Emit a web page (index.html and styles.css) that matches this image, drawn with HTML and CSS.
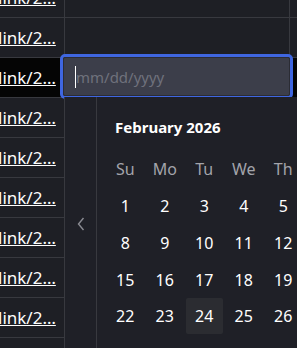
FILE: index.html
```html
<!DOCTYPE html>
<html lang="en">
<head>
    <meta charset="UTF-8">
    <title>Links grid</title>
    <link rel="stylesheet" href="styles.css">
</head>
<body>
    <div class="grid">
        <div class="row"><div class="cell link-cell"><a href="#">link/2…</a></div><div class="cell"></div><div class="cell"></div></div>
        <div class="row"><div class="cell link-cell"><a href="#">link/2…</a></div><div class="cell"></div><div class="cell"></div></div>
        <div class="row active"><div class="cell link-cell"><a href="#">link/2…</a></div><div class="cell"></div><div class="cell"></div></div>
        <div class="row"><div class="cell link-cell"><a href="#">link/2…</a></div><div class="cell"></div><div class="cell"></div></div>
        <div class="row"><div class="cell link-cell"><a href="#">link/2…</a></div><div class="cell"></div><div class="cell"></div></div>
        <div class="row"><div class="cell link-cell"><a href="#">link/2…</a></div><div class="cell"></div><div class="cell"></div></div>
        <div class="row"><div class="cell link-cell"><a href="#">link/2…</a></div><div class="cell"></div><div class="cell"></div></div>
        <div class="row"><div class="cell link-cell"><a href="#">link/2…</a></div><div class="cell"></div><div class="cell"></div></div>
        <div class="row"><div class="cell link-cell"><a href="#">link/2…</a></div><div class="cell"></div><div class="cell"></div></div>

        <!-- cell editor -->
        <div class="date-editor">
            <div class="date-input">
                <span class="caret"></span>
                <span class="placeholder">mm/dd/yyyy</span>
            </div>
        </div>

        <div class="picker">
            <div class="picker-nav">
                <svg width="8" height="14" viewBox="0 0 8 14"><path d="M6.5 1 L1.5 7 L6.5 13" fill="none" stroke="#8a8b92" stroke-width="1.4"/></svg>
            </div>
            <div class="month">
                <div class="month-title">February 2026</div>
                <div class="days">
                    <div class="wd">Su</div><div class="wd">Mo</div><div class="wd">Tu</div><div class="wd">We</div><div class="wd">Th</div><div class="wd">Fr</div><div class="wd">Sa</div>
                    <div class="day">1</div><div class="day">2</div><div class="day">3</div><div class="day">4</div><div class="day">5</div><div class="day">6</div><div class="day">7</div>
                    <div class="day">8</div><div class="day">9</div><div class="day">10</div><div class="day">11</div><div class="day">12</div><div class="day">13</div><div class="day">14</div>
                    <div class="day">15</div><div class="day">16</div><div class="day">17</div><div class="day">18</div><div class="day">19</div><div class="day">20</div><div class="day">21</div>
                    <div class="day">22</div><div class="day">23</div><div class="day today"><span>24</span></div><div class="day">25</div><div class="day">26</div><div class="day">27</div><div class="day">28</div>
                </div>
            </div>
        </div>
    </div>
</body>
</html>
```

FILE: styles.css
```css
html, body {
    margin: 0;
    height: 100%;
    overflow: hidden;
    background-color: #1e1f25;
}

body {
    font-family: "Noto Sans", "Open Sans", sans-serif;
    color: #ffffff;
}

.grid {
    position: relative;
    margin-top: -22px;
    width: 420px;
}

.row {
    display: grid;
    grid-template-columns: 65px 225px 1fr;
    height: 40px;
    box-sizing: border-box;
    border-bottom: 1px solid #38393f;
}

.row.active {
    background-color: #050505;
}

.cell {
    border-right: 1px solid #38393f;
    overflow: hidden;
}

.link-cell {
    font-size: 17px;
    line-height: 40px;
    white-space: nowrap;
    text-indent: -2px;
}

.link-cell a {
    color: #ffffff;
}

.date-editor {
    position: absolute;
    left: 60px;
    top: 76px;
    width: 233px;
    height: 45px;
    box-sizing: border-box;
    border: 3px solid #3f66e0;
    border-radius: 5px;
    background-color: #24252c;
}

.date-input {
    display: flex;
    align-items: center;
    height: 100%;
    box-sizing: border-box;
    border: 1px solid #2b2c34;
    border-radius: 2px;
    background-color: #3c3e4a;
    padding-left: 11px;
}

.caret {
    width: 1px;
    height: 22px;
    background-color: #ffffff;
}

.placeholder {
    font-size: 15px;
    color: #6f717c;
}

.picker {
    position: absolute;
    left: 64px;
    top: 119px;
    width: 300px;
    height: 280px;
    display: flex;
    background-color: #1f2027;
    border-left: 1px solid #38393f;
}

.picker-nav {
    flex: 0 0 32px;
    box-sizing: border-box;
    border-right: 1px solid #38393f;
    display: flex;
    align-items: center;
    justify-content: center;
    height: 254px;
}

.month {
    flex: 0 0 auto;
    padding-left: 8.5px;
}

.month-title {
    font-size: 15px;
    font-weight: bold;
    line-height: 20px;
    padding-top: 20px;
    padding-left: 9.5px;
    margin-bottom: 14px;
}

.days {
    display: grid;
    grid-template-columns: repeat(7, 39.5px);
    grid-auto-rows: 36.75px;
    font-size: 16px;
}

.wd, .day {
    display: flex;
    align-items: center;
    justify-content: center;
}

.wd {
    color: #a3a4ab;
}

.today span {
    display: flex;
    align-items: center;
    justify-content: center;
    width: 37px;
    height: 36px;
    border-radius: 2px;
    background-color: #2b2c31;
}
```
